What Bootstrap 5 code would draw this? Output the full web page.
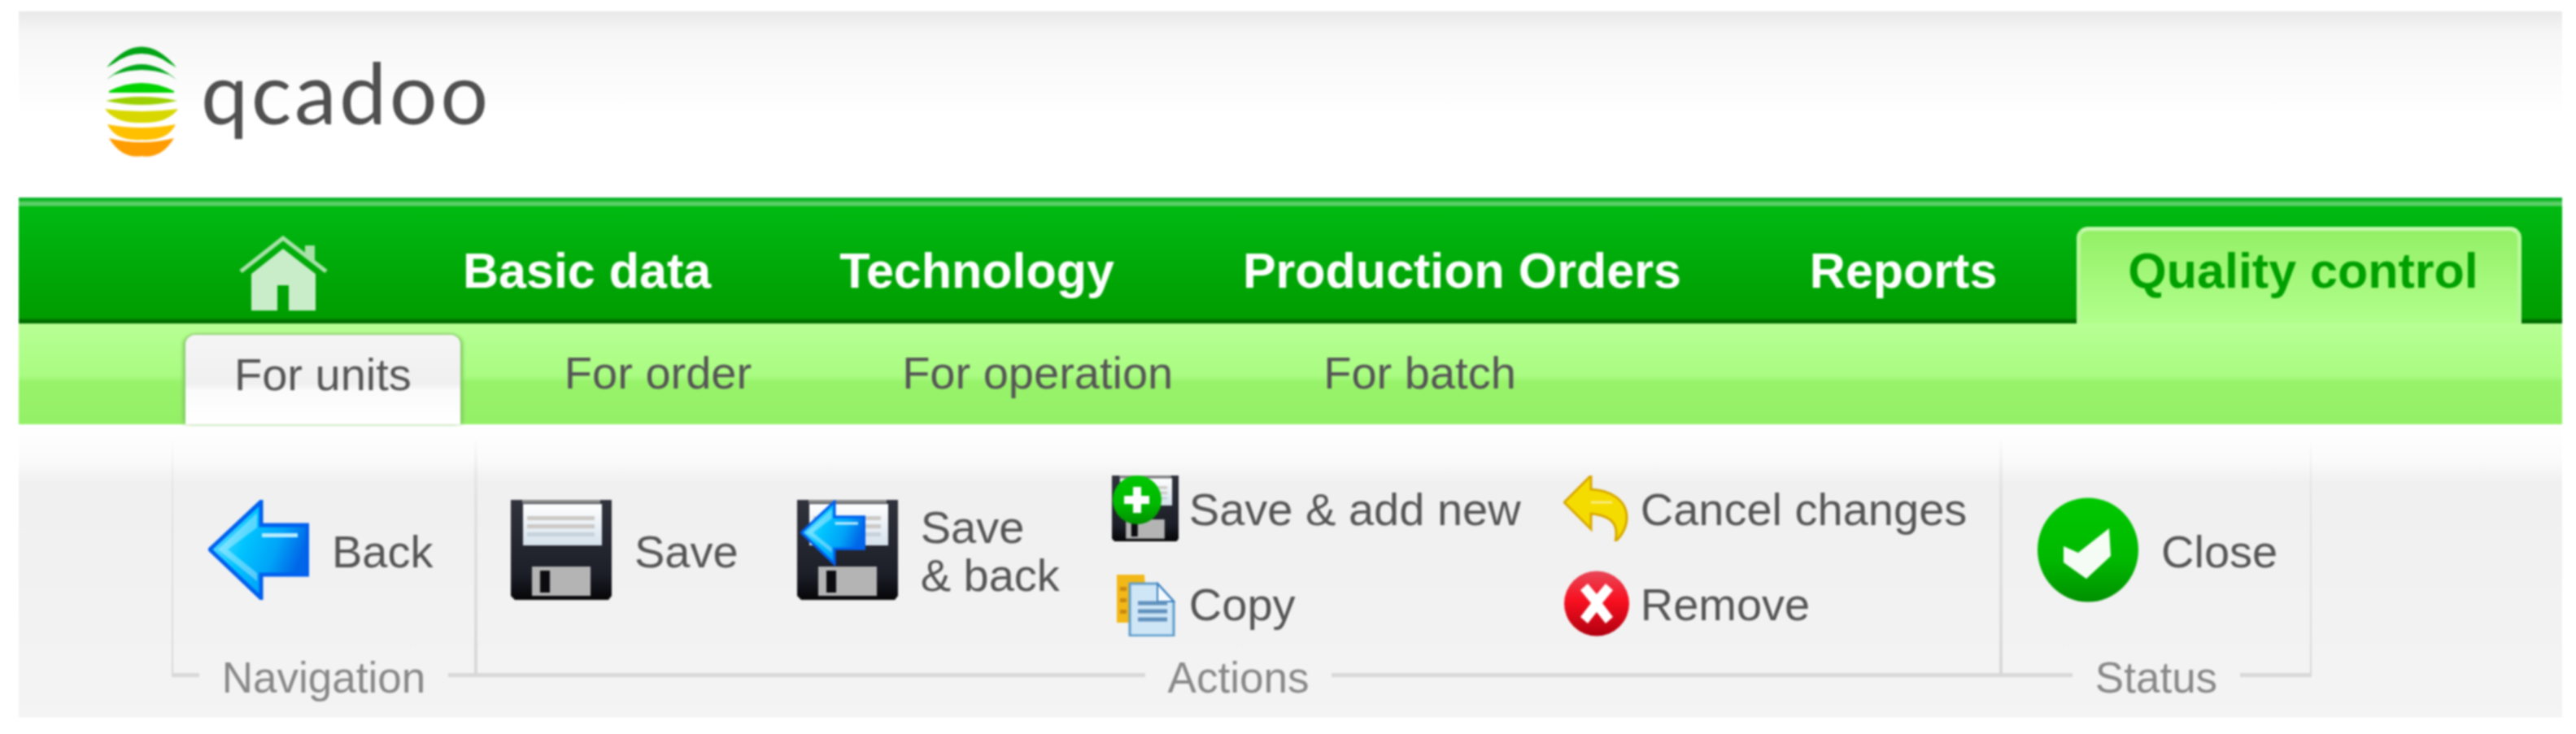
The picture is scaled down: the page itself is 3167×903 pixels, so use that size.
<!DOCTYPE html>
<html lang="en">
<head>
<meta charset="utf-8">
<title>qcadoo</title>
<link href="https://cdn.jsdelivr.net/npm/bootstrap@5.3.0/dist/css/bootstrap.min.css" rel="stylesheet">
<style>
html,body{background:#fff;overflow:hidden}
body{font-family:"Liberation Sans",Arial,sans-serif;color:#555}
.shell{margin:14px 17px 0 23px;filter:blur(.9px)}
.brandbar{height:229px;padding:42px 0 0 103px;background:linear-gradient(#e9e9e9,#f6f6f6 12%,#fff 55%);gap:25px}
.brandmark{width:96px;height:139px;flex:none}
.brandname{font-family:Lato,sans-serif;font-size:104px;line-height:122px;color:#505050;letter-spacing:3.5px;margin-top:-4px}
.mainbar{height:155px;padding:36px 0 0 270px;background:linear-gradient(#0cb52c 0,#0cb52c 3px,#00b40f 3px,#5ccf68 6px,#5ccf68 10px,#00ba12 11px,#009c00 96%,#006f00 97%,#006f00)}
.homelink{width:111px;height:93px;margin:10px 86px 0 0;flex:none}
.mainlink{font-size:61px;font-weight:700;line-height:108px;color:#fff;padding:0 79px;text-decoration:none;white-space:nowrap;flex:none}
.mainlink.activelink{margin-left:19px;padding:0 48px 0 58px;height:119px;color:#00a000;border-radius:14px 14px 0 0;border-style:solid;border-width:5px 5px 0;border-color:#c6f8ae #b8f89a;background:linear-gradient(#94f066,#b2ff8d);line-height:98px}
.subbar{height:124px;padding:14px 0 0 205px;background:linear-gradient(#b8ff95,#a9fc81 52%,#98f36b 58%,#94f066);gap:65px}
.sublink{font-size:56px;line-height:94px;color:#555;padding:0 60px;text-decoration:none;white-space:nowrap}
.sublink.activelink{height:110px;background:linear-gradient(#f5f5f5,#f0f0f0 55%,#fbfbfb 62%,#fff);border-radius:12px 12px 0 0;box-shadow:-4px 0 4px -1px #82c864,4px 0 4px -1px #82c864,0 -3px 3px -1px #9ed884;line-height:98px;margin-right:3px}
.toolbar{height:361px;padding:18px 0 0 188px;background:linear-gradient(#fff,#fbfbfb 12%,#f0f0f0 20%,#f4f4f4)}
.toolgroup{height:293px;border-style:solid;border-width:0 2px 5px;border-image:linear-gradient(transparent,#e2e2e2 25%,#dcdcdc 80%,#d8d8d8) 1}
.toolrow{height:198px;margin-top:45px}
.navgroup{width:374px}
.navgroup .toolrow,.statusgroup .toolrow{padding-left:43px}
.actiongroup{width:1875px}
.actiongroup .toolrow{padding-left:41px}
.statusgroup{width:382px}
.bigaction{height:123px;margin-top:30px;gap:28px;font-size:56px;line-height:59px;color:#555;white-space:nowrap}
.bigaction span{padding-top:3px}
.bigicon{width:124px;height:123px;flex:none}
.bigicon.okicon{height:129px}
.smallcol{gap:36px}
.smallaction{height:81px;gap:13px;font-size:56px;line-height:84px;white-space:nowrap;color:#555}
.smallicon{width:82px;height:81px;flex:none}
.space72{margin-left:72px}
.space64{margin-left:64px}
.space52{margin-left:52px}
.grouptitle{font-size:53px;line-height:60px;color:#888;background:#f3f3f3;padding:0 28px;margin-top:auto;margin-bottom:-36px;white-space:nowrap}
</style>
</head>
<body>
<svg width="0" height="0" class="d-block position-absolute">
<defs>
<linearGradient id="arrowfill" x1="0" y1="0" x2="1" y2="0.4"><stop offset="0" stop-color="#8ae8ff"/><stop offset=".45" stop-color="#00c4ff"/><stop offset=".75" stop-color="#00a4f8"/><stop offset="1" stop-color="#0068e8"/></linearGradient>
<linearGradient id="diskbody" x1="0" y1="0" x2="0" y2="1"><stop offset="0" stop-color="#30323c"/><stop offset=".75" stop-color="#1c1e28"/><stop offset="1" stop-color="#060608"/></linearGradient>
<linearGradient id="disklabel" x1="0" y1="0" x2="0" y2="1"><stop offset="0" stop-color="#fff"/><stop offset="1" stop-color="#d6e2ec"/></linearGradient>
<linearGradient id="greenball" x1="0" y1="0" x2="0" y2="1"><stop offset="0" stop-color="#00c800"/><stop offset=".6" stop-color="#00b800"/><stop offset="1" stop-color="#009000"/></linearGradient>
<linearGradient id="redball" x1="0" y1="0" x2="0" y2="1"><stop offset="0" stop-color="#e84858"/><stop offset=".45" stop-color="#f81020"/><stop offset="1" stop-color="#b00010"/></linearGradient>
<symbol id="backarrow" viewBox="0 0 124 123"><path d="M2 61 65 2V31H122V92H65V121Z" fill="url(#arrowfill)" stroke="#0060ee" stroke-width="5"/><path d="M12 61 60 16V34L24 61 60 90V100Z" fill="#fff" opacity=".35"/><rect x="66" y="41" width="44" height="5" fill="#b8ecff"/></symbol>
<symbol id="floppy" viewBox="0 0 124 123" preserveAspectRatio="none"><path d="M0 0H124V118L120 123H5L0 118Z" fill="url(#diskbody)"/><rect x="14" y="0" width="96" height="4" fill="#8a8a8a"/><rect x="15" y="5" width="97" height="51" fill="url(#disklabel)"/><g fill="#ccc9c6"><rect x="20" y="20" width="83" height="5"/><rect x="20" y="30" width="83" height="5"/></g><rect x="20" y="40" width="83" height="5" fill="#c6d2dc"/><rect x="26" y="82" width="72" height="36" fill="#b4b4b4"/><rect x="36" y="87" width="12" height="27" fill="#0c0c10"/></symbol>
<symbol id="greenok" viewBox="0 0 124 129"><ellipse cx="62" cy="64.500" rx="62" ry="64" fill="url(#greenball)"/><path d="M32 60 50 68 88 38 90 72 60 100 32 80Z" fill="#fff" opacity=".96"/></symbol>
</defs>
</svg>
<div class="shell">
  <header class="brandbar d-flex align-items-start">
    <svg class="brandmark" viewBox="0 0 96 139" aria-hidden="true">
      <path d="M5 27Q48-24 91 27L82 22Q48-2 14 22Z" fill="#00a414"/>
      <path d="M5 42Q48 4 91 42L82 36Q48 24 14 36Z" fill="#00a81a"/>
      <path d="M8 56Q48 36 88 56V58H8Z" fill="#00d400"/>
      <path d="M4 68Q48 58 92 68 48 78 4 68Z" fill="#9bd100"/>
      <path d="M3 78Q48 84 93 78 80 96 48 95 16 96 3 78Z" fill="#d8d800"/>
      <path d="M6 97Q48 105 90 97 80 118 48 116 16 118 6 97Z" fill="#ffc000"/>
      <path d="M8 114Q48 124 88 114 72 140 48 136 24 140 8 114Z" fill="#ff9c00"/>
    </svg>
    <span class="brandname">qcadoo</span>
  </header>
  <nav class="mainbar d-flex align-items-start">
    <a class="homelink d-block" href="#" aria-label="Home">
      <svg class="d-block w-100 h-100" viewBox="0 0 111 93"><path d="M3 45 55 4 108 45" fill="none" stroke="#a8e2a8" stroke-width="5"/><path d="M82 13h12v20l-12-9z" fill="#a8e2a8"/><path d="M16 48 55 17 95 48V93H62V62H48V93H16Z" fill="#c9edc9"/></svg>
    </a>
    <a class="mainlink" href="#">Basic data</a>
    <a class="mainlink" href="#">Technology</a>
    <a class="mainlink" href="#">Production Orders</a>
    <a class="mainlink" href="#">Reports</a>
    <a class="mainlink activelink" href="#">Quality control</a>
  </nav>
  <nav class="subbar d-flex align-items-start">
    <a class="sublink activelink" href="#">For units</a>
    <a class="sublink" href="#">For order</a>
    <a class="sublink" href="#">For operation</a>
    <a class="sublink" href="#">For batch</a>
  </nav>
  <section class="toolbar d-flex align-items-start">
    <div class="toolgroup navgroup d-flex flex-column">
      <div class="toolrow d-flex">
        <div class="bigaction d-flex align-items-center"><svg class="bigicon"><use href="#backarrow"/></svg><span>Back</span></div>
      </div>
      <div class="grouptitle align-self-center">Navigation</div>
    </div>
    <div class="toolgroup actiongroup d-flex flex-column">
      <div class="toolrow d-flex">
        <div class="bigaction d-flex align-items-center"><svg class="bigicon"><use href="#floppy"/></svg><span>Save</span></div>
        <div class="bigaction d-flex align-items-center space72">
          <svg class="bigicon" viewBox="0 0 124 123"><use href="#floppy" width="124" height="123"/><use href="#backarrow" x="4" y="0" width="80" height="81"/></svg>
          <span>Save<br>&amp; back</span>
        </div>
        <div class="d-flex flex-column smallcol space64">
          <div class="smallaction d-flex">
            <svg class="smallicon" viewBox="0 0 82 81"><use href="#floppy" width="82" height="81"/><ellipse cx="31" cy="30" rx="30" ry="30" fill="url(#greenball)"/><path d="M26 14h10v11h10v10H36v11H26V35H15V25h11z" fill="#fff"/></svg>
            <span>Save &amp; add new</span>
          </div>
          <div class="smallaction d-flex">
            <svg class="smallicon" viewBox="0 0 82 81"><path d="M6 5H40L44 64H6Z" fill="#f2b817"/><path d="M10 20h8v5h-8zM10 34h8v5h-8zM10 48h8v5h-8z" fill="#c98a10"/><path d="M22 16H56L76 38V80H22Z" fill="#cfe6f6" stroke="#5f9ccc" stroke-width="3"/><path d="M56 16 76 38H56Z" fill="#f4faff" stroke="#3d80c0" stroke-width="2"/><path d="M32 40H68M32 50H68M32 60H68" stroke="#5f8fbc" stroke-width="5"/></svg>
            <span>Copy</span>
          </div>
        </div>
        <div class="d-flex flex-column smallcol space52">
          <div class="smallaction d-flex">
            <svg class="smallicon" viewBox="0 0 82 81"><path d="M34 0V17C55 18 78 28 78 52 78 65 70 76 64 81 67 66 66 50 34 47V66L1 33Z" fill="#f5dc00" stroke="#d8a800" stroke-width="3"/><path d="M34 33H60" stroke="#fff" stroke-width="3" opacity=".5"/></svg>
            <span>Cancel changes</span>
          </div>
          <div class="smallaction d-flex">
            <svg class="smallicon" viewBox="0 0 82 81"><ellipse cx="41" cy="40.500" rx="40" ry="40" fill="url(#redball)"/><path d="M21 24l9-8 11 13 11-13 9 8-13 16 13 17-9 8-11-14-11 14-9-8 13-17z" fill="#fff"/></svg>
            <span>Remove</span>
          </div>
        </div>
      </div>
      <div class="grouptitle align-self-center">Actions</div>
    </div>
    <div class="toolgroup statusgroup d-flex flex-column">
      <div class="toolrow d-flex">
        <div class="bigaction d-flex align-items-center"><svg class="bigicon okicon"><use href="#greenok"/></svg><span>Close</span></div>
      </div>
      <div class="grouptitle align-self-center">Status</div>
    </div>
  </section>
</div>
<script src="https://cdn.jsdelivr.net/npm/bootstrap@5.3.0/dist/js/bootstrap.bundle.min.js"></script>
</body>
</html>
